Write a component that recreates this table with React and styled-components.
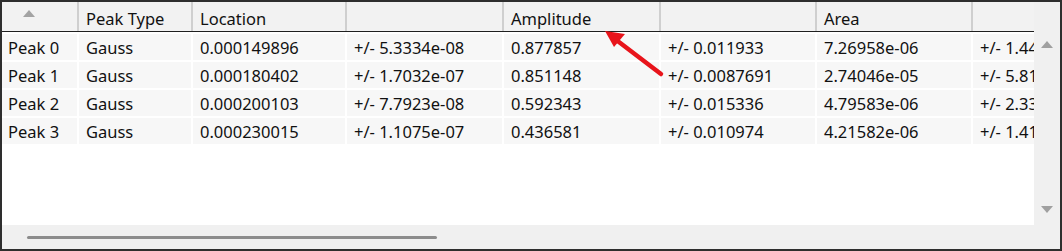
import React from 'react'
import styled, {createGlobalStyle} from 'styled-components'

const GlobalStyle = createGlobalStyle`
    html, body {
        margin: 0;
        padding: 0;
        background: #ffffff;
    }
    body {
        font-family: 'Noto Sans', 'Open Sans', sans-serif;
    }
`

const columns = [
    {key: 'name', width: 77, label: null},
    {key: 'type', width: 114, label: 'Peak Type'},
    {key: 'loc', width: 154, label: 'Location'},
    {key: 'locErr', width: 157, label: ''},
    {key: 'amp', width: 157, label: 'Amplitude'},
    {key: 'ampErr', width: 156, label: ''},
    {key: 'area', width: 156, label: 'Area'},
    {key: 'areaErr', width: 156, label: ''},
]

const peaks = [
    ['Peak 0', 'Gauss', '0.000149896', '+/- 5.3334e-08', '0.877857', '+/- 0.011933', '7.26958e-06', '+/- 1.4417e-07'],
    ['Peak 1', 'Gauss', '0.000180402', '+/- 1.7032e-07', '0.851148', '+/- 0.0087691', '2.74046e-05', '+/- 5.8123e-07'],
    ['Peak 2', 'Gauss', '0.000200103', '+/- 7.7923e-08', '0.592343', '+/- 0.015336', '4.79583e-06', '+/- 2.3310e-07'],
    ['Peak 3', 'Gauss', '0.000230015', '+/- 1.1075e-07', '0.436581', '+/- 0.010974', '4.21582e-06', '+/- 1.4104e-07'],
]

const Frame = styled.div`
    position: relative;
    width: 1062px;
    height: 251px;
    box-sizing: border-box;
    border: 2px solid #2e2e2e;
    display: grid;
    grid-template-columns: 1fr 26px;
    grid-template-rows: 1fr 24px;
    background: #ffffff;
    overflow: hidden;
`

const Viewport = styled.div`
    overflow: hidden;
    background: #ffffff;
`

const Header = styled.div`
    display: flex;
    height: 29px;
    border-bottom: 1px solid #1f1f1f;
    background: #f2f2f2;
    width: max-content;
`

const HeaderCell = styled.div`
    flex: 0 0 ${({w}) => w}px;
    box-sizing: border-box;
    border-right: 2px solid #cfcfcf;
    display: flex;
    align-items: center;
    padding-left: ${({sort}) => sort ? '21px' : '7px'};
    padding-top: 4px;
    font-size: 16.5px;
    color: #111111;
    white-space: nowrap;
`

const SortArrow = styled.span`
    width: 0;
    height: 0;
    margin-top: -10px;
    border-left: 6px solid transparent;
    border-right: 6px solid transparent;
    border-bottom: 7px solid #a3a3a3;
`

const Body = styled.div`
    display: flex;
    flex-direction: column;
    gap: 2px;
    padding-top: 2px;
    width: max-content;
`

const Row = styled.div`
    display: flex;
    height: 26px;
`

const Cell = styled.div`
    flex: 0 0 ${({w}) => w}px;
    box-sizing: border-box;
    border-right: 2px solid #ffffff;
    background: #f7f7f7;
    display: flex;
    align-items: center;
    padding-left: ${({first}) => first ? '6px' : '7px'};
    font-size: 16.5px;
    color: #111111;
    white-space: nowrap;
    overflow: hidden;
`

const VScroll = styled.div`
    background: #f0f0f0;
    display: flex;
    flex-direction: column;
    align-items: center;
    justify-content: space-between;
    padding: 39px 0 12px;
`

const Triangle = styled.span`
    width: 0;
    height: 0;
    border-left: 6px solid transparent;
    border-right: 6px solid transparent;
    ${({down}) => down
        ? 'border-top: 7px solid #a0a0a0;'
        : 'border-bottom: 7px solid #a0a0a0;'}
`

const HScroll = styled.div`
    background: #f0f0f0;
    display: flex;
    align-items: center;
    padding-left: 25px;
`

const Thumb = styled.div`
    width: 410px;
    height: 3px;
    border-radius: 2px;
    background: #8c8c8c;
`

const Corner = styled.div`
    background: #f0f0f0;
`

const Callout = styled.svg`
    position: absolute;
    left: 596px;
    top: 22px;
    overflow: visible;
`

function App() {
    return (
        <>
            <GlobalStyle />
            <Frame>
                <Viewport>
                    <Header>
                        {columns.map(col =>
                            <HeaderCell key={col.key} w={col.width} sort={col.label === null}>
                                {col.label === null ? <SortArrow /> : col.label}
                            </HeaderCell>
                        )}
                    </Header>
                    <Body>
                        {peaks.map(peak =>
                            <Row key={peak[0]}>
                                {peak.map((value, i) =>
                                    <Cell key={columns[i].key} w={columns[i].width} first={i === 0}>{value}</Cell>
                                )}
                            </Row>
                        )}
                    </Body>
                </Viewport>
                <VScroll>
                    <Triangle />
                    <Triangle down />
                </VScroll>
                <HScroll>
                    <Thumb />
                </HScroll>
                <Corner />
                {/* red annotation arrow pointing at the Amplitude header */}
                <Callout width="70" height="55" viewBox="0 0 70 55">
                    <line x1="63" y1="50" x2="17" y2="15" stroke="#e8141b" strokeWidth="4.5" strokeLinecap="round" />
                    <polygon points="7,7 27,10 16,23" fill="#e8141b" />
                </Callout>
            </Frame>
        </>
    )
}

export default App
